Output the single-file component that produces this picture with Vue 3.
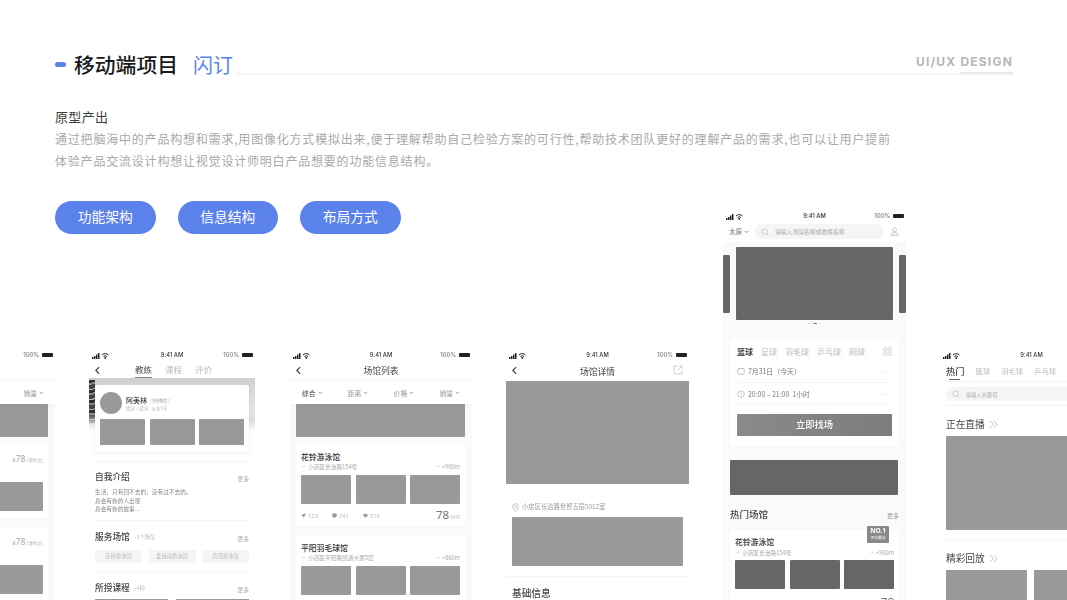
<script setup>
const buttons = ['功能架构', '信息结构', '布局方式']
const phones = ['sales', 'coach', 'list', 'detail', 'home', 'live']
const filters = ['综合', '距离', '价格', '销量']
const venues = [
  { name: '花铃游泳馆', addr: '小店区长治路154号', dist: '<900m' },
  { name: '平阳羽毛球馆', addr: '小店区平阳路凯通大厦5层', dist: '<860m' },
]
const chips = ['花铃游泳馆', '爱运动游泳馆', '滨河游泳馆']
const sports = ['足球', '羽毛球', '乒乓球', '网球']
const liveTabs = ['篮球', '羽毛球', '乒乓球']
</script>

<template>
  <main class="page">
    <header class="head">
      <span class="pill"></span>
      <h1 class="title">移动端项目</h1>
      <span class="sub">闪订</span>
      <span class="rule"></span>
      <span class="tag">UI/UX <span class="tag-on">DESIGN</span></span>
    </header>

    <section class="intro">
      <h2>原型产出</h2>
      <p>通过把脑海中的产品构想和需求,用图像化方式模拟出来,便于理解帮助自己检验方案的可行性,帮助技术团队更好的理解产品的需求,也可以让用户提前<br />体验产品交流设计构想让视觉设计师明白产品想要的功能信息结构。</p>
      <div class="btns">
        <button v-for="b in buttons" :key="b" class="btn">{{ b }}</button>
      </div>
    </section>

    <div class="canvas">
      <section v-for="p in phones" :key="p" class="phone" :class="'ph-' + p">
        <div class="status">
          <svg class="sig" viewBox="0 0 17 7" width="17" height="7">
            <path d="M0 5h1.500v2H0zM2 4h1.500v3H2zM4 2.500h1.500V7H4zM6 1h1.500v6H6z" fill="#222" />
            <path d="M10 3a4.500 4.500 0 0 1 6.500 0M11.500 4.600a2.500 2.500 0 0 1 3.500 0" fill="none" stroke="#222" stroke-width="1" />
            <circle cx="13.250" cy="6" r=".9" fill="#222" />
          </svg>
          <span class="time">9:41 AM</span>
          <span class="batt"><span>100%</span><i></i></span>
        </div>

        <!-- 销量列表 -->
        <template v-if="p === 'sales'">
          <div class="nav"></div>
          <div class="filter end"><span class="f">销量<svg class="car" viewBox="0 0 6 4"><path d="M1 1l2 2 2-2" /></svg></span></div>
          <div class="body">
            <div class="hero"></div>
            <div v-for="n in 2" :key="n" class="card price-card">
              <div class="price"><em>¥</em>78<small>/课时起</small></div>
              <div class="shot"></div>
            </div>
          </div>
        </template>

        <!-- 教练 -->
        <template v-else-if="p === 'coach'">
          <div class="tabs">
            <svg class="back" viewBox="0 0 6 10"><path d="M5 1L1 5l4 4" /></svg>
            <span class="ct on">教练</span><span class="ct">课程</span><span class="ct">评价</span>
          </div>
          <div class="cover">
            <div class="tex"></div>
            <div class="coach-card">
              <div class="who">
                <span class="ava"></span>
                <div>
                  <div class="nm">阿美林 <span class="nm-tag">资长推荐</span></div>
                  <div class="nm-sub">蝶泳丨蛙泳&nbsp;&nbsp;&nbsp;从业5年</div>
                </div>
              </div>
              <div class="trio coach-trio"><i></i><i></i><i></i></div>
            </div>
          </div>
          <div class="sec sec-a">
            <div class="sec-h"><b>自我介绍</b><span class="more">更多</span></div>
            <p class="bio">生活，只有回不去的，没有过不去的。<br />总会有新的人出现<br />总会有新的故事...</p>
          </div>
          <div class="sec sec-b">
            <div class="sec-h"><b>服务场馆</b><small>-3个场馆</small><span class="more">更多</span></div>
            <div class="chips"><span v-for="c in chips" :key="c">{{ c }}</span></div>
          </div>
          <div class="sec sec-c">
            <div class="sec-h"><b>所授课程</b><small>-4种</small><span class="more">更多</span></div>
            <div class="strip"><i></i><i></i></div>
          </div>
        </template>

        <!-- 场馆列表 -->
        <template v-else-if="p === 'list'">
          <div class="nav">
            <svg class="back" viewBox="0 0 6 10"><path d="M5 1L1 5l4 4" /></svg>
            <span class="nav-t">场馆列表</span>
          </div>
          <div class="filter">
            <span v-for="(f, i) in filters" :key="f" class="f" :class="{ dk: i === 0 }">{{ f }}<svg class="car" viewBox="0 0 6 4"><path d="M1 1l2 2 2-2" /></svg></span>
          </div>
          <div class="body">
            <div class="hero"></div>
            <div v-for="v in venues" :key="v.name" class="card">
              <div class="v-name">{{ v.name }}</div>
              <div class="v-addr"><span>• {{ v.addr }}</span><span>• {{ v.dist }}</span></div>
              <div class="trio"><i></i><i></i><i></i></div>
              <div class="stats">
                <span>
                  <svg viewBox="0 0 8 8"><path d="M8 0L0 3.500l3 1.200L4.300 8z" /></svg>123
                </span>
                <span><svg viewBox="0 0 8 8"><path d="M4 .5c2.200 0 4 1.300 4 3.200S6.200 7 4 7L2 8V6.500C.8 6 0 5 0 3.700 0 1.800 1.800.5 4 .5z" /></svg>341</span>
                <span><svg viewBox="0 0 8 8"><path d="M4 7.500L.8 4.200C-.8 2.300 2.600-.5 4 2 5.400-.5 8.800 2.300 7.200 4.200z" /></svg>515</span>
                <span class="amt">78<small>RMB</small></span>
              </div>
            </div>
          </div>
        </template>

        <!-- 场馆详情 -->
        <template v-else-if="p === 'detail'">
          <div class="nav plain">
            <svg class="back" viewBox="0 0 6 10"><path d="M5 1L1 5l4 4" /></svg>
            <span class="nav-t">场馆详情</span>
            <svg class="share" viewBox="0 0 10 10"><path d="M5 1H1v8h8V5M4.500 5.500L9 1M6.500 1H9v2.500" /></svg>
          </div>
          <div class="d-hero"></div>
          <div class="d-addr">
            <svg viewBox="0 0 8 10"><path d="M4 9.500C2 7.500.6 5.800.6 4a3.400 3.400 0 0 1 6.800 0c0 1.800-1.400 3.500-3.400 5.500z" /><circle cx="4" cy="4" r="1.300" /></svg>
            小店区长治路世贸五层5012室
          </div>
          <div class="d-map"></div>
          <div class="d-h">基础信息</div>
        </template>

        <!-- 首页 -->
        <template v-else-if="p === 'home'">
          <div class="h-search">
            <span class="city">太原<svg class="car" viewBox="0 0 6 4"><path d="M1 1l2 2 2-2" /></svg></span>
            <span class="s-pill">
              <svg class="glass" viewBox="0 0 10 10"><circle cx="4.500" cy="4.500" r="3.500" /><path d="M7 7l2.300 2.300" /></svg>
              请输入场馆名称或教练名称
            </span>
            <svg class="user" viewBox="0 0 10 10"><circle cx="5" cy="3.200" r="2.300" /><path d="M1 9.300c0-4 8-4 8 0z" /></svg>
          </div>
          <div class="body home-body">
            <div class="banner"><i></i><b></b><i></i></div>
            <div class="dots"><i></i><i class="w"></i><i></i></div>
            <div class="book">
              <div class="b-tabs">
                <b>篮球</b>
                <span v-for="s in sports" :key="s">{{ s }}</span>
                <svg class="grid4" viewBox="0 0 10 10"><circle cx="2.500" cy="2.500" r="2" /><circle cx="7.500" cy="2.500" r="2" /><circle cx="2.500" cy="7.500" r="2" /><circle cx="7.500" cy="7.500" r="2" /></svg>
              </div>
              <div class="b-row first">
                <svg viewBox="0 0 10 10"><rect x="1" y="2" width="8" height="7" rx="1" /><path d="M3 1v2M7 1v2" /></svg>
                <span>7月31日（今天）</span><em>····</em>
              </div>
              <div class="b-row">
                <svg viewBox="0 0 10 10"><circle cx="5" cy="5" r="4" /><path d="M5 3v2l1 1" /></svg>
                <span>20:00 – 21:00&nbsp;&nbsp;1小时</span><em>····</em>
              </div>
              <div class="cta">立即找场</div>
            </div>
            <div class="ad"></div>
            <div class="hot-h"><b>热门场馆</b><span>更多</span></div>
            <div class="card dark">
              <div class="badge"><b>NO.1</b><span>评论最佳</span></div>
              <div class="v-name">花铃游泳馆</div>
              <div class="v-addr"><span>• 小店区长治路154号</span><span>• &lt;900m</span></div>
              <div class="trio"><i></i><i></i><i></i></div>
              <div class="stats"><span class="amt">78</span></div>
            </div>
          </div>
        </template>

        <!-- 直播 -->
        <template v-else>
          <div class="l-tabs">
            <b>热门</b><span v-for="t in liveTabs" :key="t">{{ t }}</span>
          </div>
          <div class="l-search">
            <span class="s-pill">
              <svg class="glass" viewBox="0 0 10 10"><circle cx="4.500" cy="4.500" r="3.500" /><path d="M7 7l2.300 2.300" /></svg>
              请输入关键词
            </span>
          </div>
          <div class="l-sec l-one">
            <div class="l-h">正在直播<svg viewBox="0 0 10 10"><path d="M1 1l4 4-4 4M5 1l4 4-4 4" /></svg></div>
            <div class="l-big"></div>
          </div>
          <div class="l-sec l-two">
            <div class="l-h">精彩回放<svg viewBox="0 0 10 10"><path d="M1 1l4 4-4 4M5 1l4 4-4 4" /></svg></div>
            <div class="l-pair"><i></i><i></i></div>
          </div>
        </template>
      </section>
    </div>
  </main>
</template>

<style>
html, body { margin: 0; background: #fff; }
</style>

<style scoped>
* { box-sizing: border-box; }
.page {
  position: relative; width: 1067px; height: 600px; overflow: hidden; background: #fff;
  font-family: "Noto Sans CJK SC", "Noto Sans", sans-serif;
}
/* header */
.head { display: flex; align-items: flex-end; height: 74px; padding: 0 55px; }
.pill { width: 11px; height: 5px; border-radius: 3px; background: #5b82ea; margin: 0 8px 7px 0; }
.title { margin: 0 15px -2px 0; font-size: 20.800px; line-height: 24px; font-weight: 500; color: #1a1a1a; }
.sub { font-size: 20px; line-height: 24px; color: #5b82ea; width: 43px; margin-bottom: -3px; }
.rule { flex: 1; height: 2px; background: #f5f5f5; margin-bottom: -1px; }
.tag {
  position: absolute; right: 54px; top: 55px; font: 700 12px/14px Inter, sans-serif;
  letter-spacing: 1.200px; color: #b6b6b6; white-space: nowrap;
}
.tag-on { display: inline-block; position: relative; }
.tag-on::after { content: ""; position: absolute; left: 0; right: 0; top: 17px; height: 2px; background: #e8e8e8; }
/* intro */
.intro { padding: 35px 55px 0; }
.intro h2 { margin: 0; font-size: 13px; line-height: 16px; letter-spacing: .35px; font-weight: 400; color: #3c3c3c; }
.intro p { margin: 3px 0 0; font-size: 12px; line-height: 22px; letter-spacing: .8px; color: #a8a8a8; white-space: nowrap; }
.btns { display: flex; gap: 22px; margin-top: 29px; }
.btn {
  width: 100.500px; height: 33px; border: 0; border-radius: 17px; padding: 0 0 3px; background: #5b82ea; color: #fff;
  font: 400 13.800px/30px "Noto Sans CJK SC", sans-serif;
}
/* phones on the canvas */
.canvas { position: absolute; inset: 0; filter: blur(.35px); pointer-events: none; }
.phone { position: absolute; background: #fff; overflow: hidden; color: #444; }
.ph-sales { left: -127px; top: 348px; width: 182px; height: 252px; }
.ph-coach { left: 89px; top: 348px; width: 166px; height: 252px; }
.ph-list { left: 290px; top: 348px; width: 182px; height: 252px; }
.ph-detail { left: 506px; top: 348px; width: 183px; height: 252px; }
.ph-home { left: 723px; top: 209px; width: 183px; height: 391px; }
.ph-live { left: 940px; top: 348px; width: 183px; height: 252px; }

.status { display: flex; align-items: center; justify-content: space-between; height: 14px; padding: 0 2px 0 3px; font: 500 5.800px/14px Inter, sans-serif; color: #333; position: relative; }
.sig { width: 17px; height: 7px; }
.time { position: absolute; left: 0; right: 0; text-align: center; }
.batt { display: flex; align-items: center; gap: 3px; color: #777; }
.batt i { width: 11px; height: 4px; background: #222; border-radius: 1px; }

.nav { position: relative; display: flex; align-items: center; justify-content: center; height: 19px; border-bottom: 1px solid #f4f4f4; }
.nav.plain { border: 0; }
.back { width: 5px; height: 9px; fill: none; stroke: #333; stroke-width: 1.300; flex: none; }
.nav .back { position: absolute; left: 6px; top: 4px; }
.nav-t { font-size: 8.800px; line-height: 12px; color: #444; }
.share { position: absolute; right: 6px; top: 3px; width: 10px; height: 10px; fill: none; stroke: #bbb; stroke-width: .7; }

.filter { display: flex; justify-content: space-between; align-items: center; height: 23px; padding: 0 12px 0 12px; box-shadow: 0 2px 3px rgba(0,0,0,.03); position: relative; }
.filter.end { justify-content: flex-end; padding-right: 11px; }
.f { font-size: 6.800px; color: #999; display: flex; align-items: center; gap: 2px; }
.f.dk { color: #444; }
.car { width: 5px; height: 3.500px; fill: none; stroke: #777; stroke-width: .9; }

.body { background: #fafafa; padding: 0 7px 0 6px; height: 100%; }
.hero { height: 33px; background: #999; border-radius: 1px; }
.card { position: relative; margin-top: 8px; padding: 8px 5px 5px; background: #fff; height: 81px; }
.card + .card { margin-top: 10px; }
.price-card { height: 73px; padding: 0; }
.card + .price-card { margin-top: 10px; }
.price { position: absolute; right: 5px; top: 7px; font: 400 8.500px/14px "Noto Sans", sans-serif; color: #aaa; white-space: nowrap; }
.price em { font-style: normal; font-size: 6px; }
.price small { font-size: 4.500px; color: #bbb; margin-left: 1px; }
.shot { position: absolute; right: 5px; top: 37px; width: 100px; height: 29px; background: #999; border-radius: 1px; }
.v-name { font-size: 7.800px; line-height: 8px; color: #333; font-weight: 500; white-space: nowrap; }
.v-addr { display: flex; justify-content: space-between; margin-top: 2px; font-size: 5.700px; line-height: 7px; color: #aaa; padding-left: 0; }
.trio { display: flex; justify-content: space-between; margin-top: 5px; }
.trio i { width: 50px; height: 29px; background: #999; border-radius: 1px; }
.stats { display: flex; gap: 14px; align-items: center; height: 10px; margin-top: 7px; font: 400 5.800px/10px "Noto Sans", sans-serif; color: #bbb; }
.stats svg { width: 5px; height: 5px; fill: #999; margin-right: 2px; }
.stats .amt { margin-left: auto; font-size: 11.500px; color: #777; }
.stats .amt small { font-size: 4.500px; color: #ccc; margin-left: 1px; }

/* coach */
.tabs { position: relative; display: flex; justify-content: flex-start; height: 16px; padding-left: 46px; gap: 13px; }
.tabs .back { position: absolute; left: 6px; top: 4px; }
.ct { position: relative; font-size: 8.500px; line-height: 14px; color: #bbb; }
.ct.on { color: #444; }
.ct.on::after { content: ""; position: absolute; left: 0; right: 0; top: 15px; height: 1px; background: #888; }
.cover { position: relative; height: 83px; padding: 7px 6px 0; background: linear-gradient(#cfcfcf, #e4e4e4 30px, #dedede 42px, #fff 54px); }
.tex { position: absolute; left: 0; top: 2px; width: 6px; height: 45px; background: repeating-linear-gradient(170deg, #2f2f2f 0 3px, #8a8a8a 3px 5px, #444 5px 9px, #bbb 9px 10px); -webkit-mask-image: linear-gradient(#000 75%, transparent); mask-image: linear-gradient(#000 75%, transparent); }
.coach-card { position: relative; height: 67px; background: #fff; border-radius: 2px; box-shadow: 0 1px 4px rgba(0,0,0,.06); padding: 7px 5px; }
.who { display: flex; align-items: center; gap: 4px; height: 22px; }
.ava { width: 22px; height: 22px; border-radius: 50%; background: #999; }
.nm { font-size: 7px; line-height: 10px; color: #333; font-weight: 500; }
.nm-tag { display: inline-block; font-size: 3.500px; line-height: 6px; padding: 0 3px; margin-left: 1px; background: #f2f2f2; color: #aaa; font-weight: 400; vertical-align: 1px; }
.nm-sub { font-size: 4.500px; line-height: 7px; color: #bbb; }
.coach-trio { margin-top: 5px; }
.coach-trio i { width: 45px; height: 26px; }
.sec { margin: 0 6px; border-top: 1px solid #f4f4f4; }
.sec-h { display: flex; align-items: center; height: 14px; }
.sec-h b { font-size: 8.700px; font-weight: 500; color: #444; }
.sec-h small { font-size: 5.200px; color: #bbb; margin-left: 5px; }
.more { margin-left: auto; font-size: 5.800px; color: #aaa; margin-top: 4px; }
.sec-a { margin-top: 0; height: 59px; padding-top: 7px; }
.bio { margin: 5px 0 0; font-size: 5.700px; line-height: 8.500px; color: #888; white-space: nowrap; }
.sec-b { height: 51px; padding-top: 8px; }
.chips { display: flex; justify-content: space-between; margin-top: 7px; }
.chips span { width: 47px; height: 13px; background: #f5f5f5; text-align: center; font-size: 5.300px; line-height: 13px; color: #b5b5b5; }
.sec-c { padding-top: 8px; }
.strip { display: flex; gap: 8px; margin-top: 5px; }
.strip i { flex: 1; height: 8px; background: #999; }

/* detail */
.d-hero { height: 103px; background: #999; }
.d-addr { display: flex; align-items: center; gap: 3px; margin: 18px 0 0 6px; height: 10px; font-size: 6.300px; line-height: 10px; color: #999; white-space: nowrap; }
.d-addr svg { width: 7px; height: 9px; fill: none; stroke: #aaa; stroke-width: .7; }
.d-map { height: 49px; margin: 5px 6px 0; background: #999; border-radius: 1px; }
.d-h { margin-top: 10px; border-top: 1px solid #f5f5f5; padding: 10px 6px 0; font-size: 9.700px; line-height: 13px; color: #444; font-weight: 500; }

/* home */
.h-search { display: flex; align-items: flex-start; height: 19px; padding: 1px 7px 0 6px; }
.city { width: 26px; display: flex; align-items: center; gap: 2px; font-size: 6.500px; line-height: 15px; color: #777; flex: none; }
.s-pill { display: flex; align-items: center; gap: 6px; height: 15px; border-radius: 8px; background: #f5f5f5; font-size: 5.800px; color: #aaa; padding-left: 6px; white-space: nowrap; }
.h-search .s-pill { width: 130px; }
.glass { width: 8px; height: 8px; fill: none; stroke: #aaa; stroke-width: .7; flex: none; }
.user { width: 9px; height: 9px; margin: 3px 0 0 6px; fill: none; stroke: #aaa; stroke-width: .7; }
.home-body { padding: 5px 0 0; }
.banner { display: flex; justify-content: space-between; align-items: center; height: 73px; }
.banner b { width: 157px; height: 73px; background: #666; border-radius: 1px; }
.banner i { width: 7px; height: 58px; background: #666; border-radius: 1px; }
.dots { display: flex; justify-content: center; gap: 3px; height: 3px; margin-top: 2px; align-items: center; }
.dots i { width: 1.500px; height: 1.500px; background: #ccc; border-radius: 1px; }
.dots i.w { width: 4px; background: #777; }
.book { margin: 14px 7px 0; height: 107px; padding: 0 7px; background: #fff; border-radius: 2px; }
.b-tabs { display: flex; align-items: center; gap: 8px; height: 23px; font-size: 8px; color: #bbb; padding-top: 1px; white-space: nowrap; }
.b-tabs b { color: #444; font-weight: 700; }
.grid4 { width: 9px; height: 9px; margin-left: auto; fill: none; stroke: #bbb; stroke-width: .7; }
.b-row { display: flex; align-items: center; gap: 3px; height: 22px; border-bottom: 1px solid #f4f4f4; font-size: 6.900px; color: #777; white-space: nowrap; }
.b-row.first { height: 21px; padding-bottom: 2px; }
.b-row svg { width: 8px; height: 8px; fill: none; stroke: #999; stroke-width: .7; flex: none; }
.b-row em { margin-left: auto; font-style: normal; color: #bbb; font-size: 4.500px; letter-spacing: -.2px; }
.cta { height: 22px; margin-top: 9px; background: linear-gradient(90deg, #8a8a8a, #7c7c7c); border-radius: 1px; color: #fff; text-align: center; font-size: 9.300px; line-height: 21px; font-weight: 500; }
.ad { height: 35px; margin: 14px 8px 0 7px; background: #666; border-radius: 1px; }
.hot-h { display: flex; align-items: center; justify-content: space-between; height: 35px; padding: 2px 7px 0; }
.hot-h b { font-size: 9.500px; font-weight: 500; color: #444; }
.hot-h span { font-size: 6px; color: #999; margin-top: 4px; }
.card.dark { margin: 0 7px; padding: 8px 5px 0; height: 80px; }
.dark .v-addr { margin-top: 3px; }
.dark .trio i { background: #666; }
.dark .trio { margin-top: 4px; }
.dark .stats { margin-top: 8px; }
.badge { position: absolute; right: 10px; top: -4px; width: 22px; height: 17px; background: #888; border-radius: 1px; color: #fff; text-align: center; }
.badge b { display: block; font: 700 6.500px/9px "Noto Sans", sans-serif; }
.badge span { display: block; font-size: 3.800px; line-height: 6px; white-space: nowrap; }

/* live */
.l-tabs { display: flex; align-items: center; height: 20px; padding: 0 0 2px 6px; gap: 11px; border-bottom: 1px solid #f4f4f4; position: relative; font-size: 7.300px; color: #bbb; white-space: nowrap; }
.l-tabs b { font-size: 9.300px; font-weight: 500; color: #444; }
.l-tabs b::after { content: ""; position: absolute; left: 9px; bottom: 1px; width: 11px; height: 1px; background: #666; }
.l-search { height: 24px; padding: 5px 0 0 6px; border-bottom: 1px solid #f4f4f4; }
.l-search .s-pill { height: 14px; width: 200px; font-size: 5.200px; }
.l-sec { padding-left: 6px; }
.l-h { display: flex; align-items: center; gap: 4px; height: 14px; font-size: 9.700px; color: #444; }
.l-h svg { width: 9px; height: 9px; fill: none; stroke: #aaa; stroke-width: .8; }
.l-one { height: 135px; padding-top: 11px; border-bottom: 1px solid #f4f4f4; }
.l-big { height: 94px; margin-top: 5px; background: #999; border-radius: 1px; }
.l-two { padding-top: 10px; }
.l-pair { display: flex; gap: 7px; margin-top: 5px; }
.l-pair i { width: 81px; height: 40px; background: #999; border-radius: 1px; flex: none; }
</style>
